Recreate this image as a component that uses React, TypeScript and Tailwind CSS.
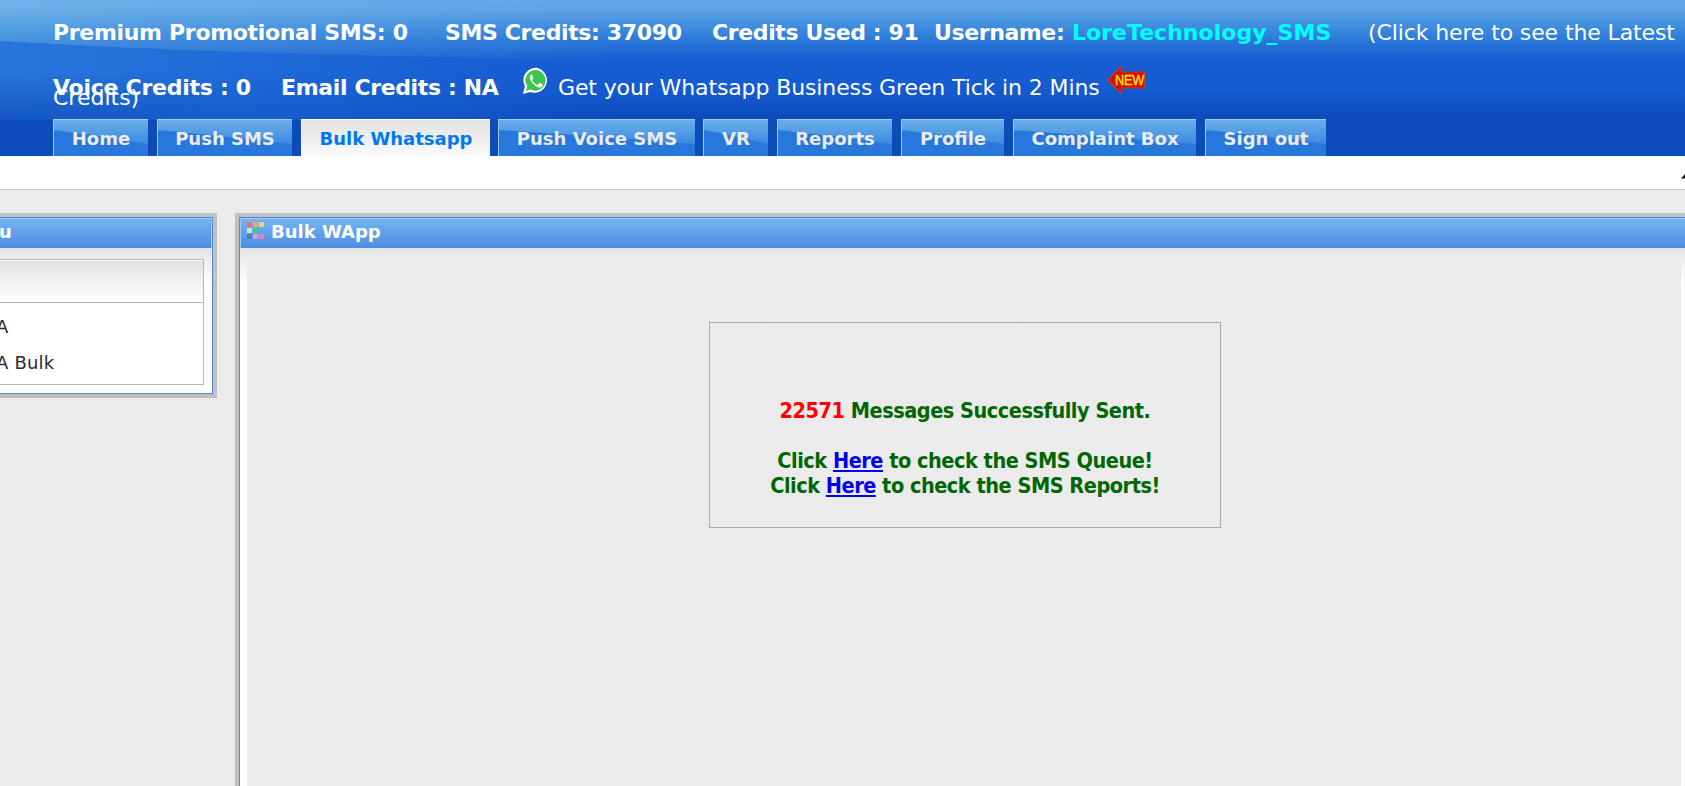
import React from "react";

const tabs = [
  { label: "Home", cls: "ml-[53px] w-[95px]" },
  { label: "Push SMS", cls: "ml-[9px] w-[135px]" },
  { label: "Bulk Whatsapp", cls: "ml-[9px] w-[189px]", active: true },
  { label: "Push Voice SMS", cls: "ml-[8px] w-[197px]" },
  { label: "VR", cls: "ml-[8px] w-[65px]" },
  { label: "Reports", cls: "ml-[9px] w-[115px]" },
  { label: "Profile", cls: "ml-[9px] w-[103px]" },
  { label: "Complaint Box", cls: "ml-[9px] w-[183px]" },
  { label: "Sign out", cls: "ml-[9px] w-[121px]" },
];

function HeaderBackground() {
  return (
    <svg className="absolute inset-0 h-[120px] w-full" viewBox="0 0 1685 120" preserveAspectRatio="none">
      <defs>
        <linearGradient id="base" x1="0" y1="0" x2="0" y2="1">
          <stop offset="0" stopColor="#62a8e8" />
          <stop offset="0.08" stopColor="#5ca3e6" />
          <stop offset="0.3" stopColor="#307fda" />
          <stop offset="0.5" stopColor="#165dd2" />
          <stop offset="0.74" stopColor="#155bd1" />
          <stop offset="1" stopColor="#0d4aba" />
        </linearGradient>
        <linearGradient id="lower" x1="0" y1="0" x2="1" y2="0">
          <stop offset="0" stopColor="#2876dc" />
          <stop offset="0.5" stopColor="#1c68d6" />
          <stop offset="1" stopColor="#165dd2" stopOpacity="0" />
        </linearGradient>
        <linearGradient id="lowerShade" x1="0" y1="0" x2="1" y2="0">
          <stop offset="0" stopColor="#0d4aba" stopOpacity="0.75" />
          <stop offset="1" stopColor="#0d4aba" stopOpacity="0" />
        </linearGradient>
        <linearGradient id="fade" x1="0" y1="0" x2="0" y2="1">
          <stop offset="0.4" stopColor="#000" />
          <stop offset="1" stopColor="#fff" />
        </linearGradient>
        <mask id="fadeMask">
          <rect x="0" y="41" width="620" height="79" fill="url(#fade)" />
        </mask>
        <linearGradient id="glow" x1="0" y1="0" x2="1" y2="0">
          <stop offset="0" stopColor="#8accee" stopOpacity="0.3" />
          <stop offset="1" stopColor="#8accee" stopOpacity="0" />
        </linearGradient>
      </defs>
      <rect width="1685" height="120" fill="url(#base)" />
      <path d="M0 0H620V60Q240 56 0 41Z" fill="url(#glow)" />
      <path d="M0 41Q240 56 620 60V120H0Z" fill="url(#lower)" />
      <path d="M0 41Q240 56 620 60V120H0Z" fill="url(#lowerShade)" mask="url(#fadeMask)" />
    </svg>
  );
}

function TabShine() {
  return (
    <svg className="absolute inset-0 h-full w-full" viewBox="0 0 100 36" preserveAspectRatio="none">
      <defs>
        <linearGradient id="shine" x1="0" y1="0" x2="0" y2="1">
          <stop offset="0" stopColor="#6aaeec" />
          <stop offset="1" stopColor="#3c8ae0" />
        </linearGradient>
      </defs>
      <path d="M0 0H100V24Q50 16 0 10Z" fill="url(#shine)" />
    </svg>
  );
}

function WhatsappIcon() {
  return (
    <svg className="ml-[23px] -mt-[9px] h-[28px] w-[27px] shrink-0" viewBox="0 0 26 27">
      <path d="M13.2.8A12 12 0 0 0 2.8 18.6L.8 26l7.1-2A12 12 0 1 0 13.2.8Z" fill="#fff" />
      <path d="M13.2 2.9a10 10 0 0 0-8.1 15.7l-1.3 4.5 4.4-1.3A10 10 0 1 0 13.2 2.9Z" fill="#3fc351" />
      <path
        d="M9.4 7.3c-.5 0-1.8.9-1.8 2.8 0 2 1.4 3.9 1.7 4.2.2.3 2.8 4.3 6.8 5.4 1.9.6 3.6-.6 3.8-1.8.2-.8.1-1-.3-1.2l-2.4-1.2c-.4-.1-.7 0-1 .4l-.8 1.1c-.3.3-.6.3-1 .1-2-.8-3.5-2.2-4.5-4-.2-.4 0-.7.9-1.9.2-.3.1-.6 0-.8L9.9 7.6c-.1-.3-.3-.3-.5-.3Z"
        fill="#fff"
      />
    </svg>
  );
}

function NewBadge() {
  return (
    <svg className="-mt-[11px] h-[30px] w-[39px] shrink-0" viewBox="0 0 39 30">
      <path d="M.8 15 14.500 1v6H37.500v16H14.500v6Z" fill="#e00808" stroke="#b8402c" strokeWidth="1.2" />
      <text x="8" y="20" textLength="29" lengthAdjust="spacingAndGlyphs" fontFamily="Liberation Sans, sans-serif" fontSize="15.5" fill="#ffee00" stroke="#ffee00" strokeWidth="0.3">
        NEW
      </text>
    </svg>
  );
}

const dots = ["#ff6b6b", "#ffa36b", "#f3d35a", "#cdeaa5", "#4fcb63", "#5eaaf0", "#5479b5", "#d99ae0", "#ff77b0"];

function GridIcon() {
  return (
    <svg className="h-[17px] w-[17px] shrink-0" viewBox="0 0 17 17">
      {dots.map((c, i) => (
        <rect key={c} x={(i % 3) * 6} y={Math.floor(i / 3) * 6} width="5" height="5" fill={c} />
      ))}
    </svg>
  );
}

export default function App() {
  return (
    <div className="flex h-[786px] w-[1685px] flex-col overflow-hidden bg-[#ebebeb] font-['Verdana','DejaVu_Sans',sans-serif]">
      <header className="relative flex h-[156px] shrink-0 flex-col bg-[#0d4aba] text-[22px] leading-[24px] text-white">
        <HeaderBackground />
        <div className="relative mt-[21px] flex h-[24px] pl-[53px] tracking-[-0.32px] whitespace-nowrap">
          <b className="w-[392px] shrink-0">Premium Promotional SMS: 0</b>
          <b className="w-[267px] shrink-0 tracking-[-0.36px]">SMS Credits: 37090</b>
          <b className="w-[222px] shrink-0 tracking-[-0.38px]">Credits Used : 91</b>
          <b className="w-[138px] shrink-0 tracking-[-0.4px]">Username:</b>
          <b className="w-[296px] shrink-0 text-[#00ffff]">
            <span className="tracking-[0.03px]">LoreTechnology_SMS</span>
          </b>
          <span className="tracking-[-0.12px]">(Click here to see the Latest</span>
          <span className="absolute top-[65px] left-[53px] tracking-normal">Credits)</span>
        </div>
        <div className="relative mt-[31px] flex h-[24px] pl-[53px] tracking-[-0.32px] whitespace-nowrap">
          <b className="w-[228px] shrink-0 tracking-[-0.26px]">Voice Credits : 0</b>
          <b className="w-[218px] shrink-0 tracking-[-0.36px]">Email Credits : NA</b>
          <WhatsappIcon />
          <span className="ml-[9px] w-[549px] shrink-0 tracking-[-0.12px]">Get your Whatsapp Business Green Tick in 2 Mins</span>
          <NewBadge />
        </div>
        <nav className="relative mt-[19px] flex h-[37px] text-[18px] leading-[37px] font-bold whitespace-nowrap">
          {tabs.map((t) =>
            t.active ? (
              <div key={t.label} className={`${t.cls} relative shrink-0 border-t border-l border-white bg-linear-to-b from-[#e2e2e2] to-[#fafafa] text-center text-[#0078f0]`}>
                {t.label}
              </div>
            ) : (
              <div key={t.label} className={`${t.cls} relative shrink-0 border-t border-l border-[#9fcaf5] bg-[#2877dc] text-center text-[#ebebeb]`}>
                <TabShine />
                <span className="relative">{t.label}</span>
              </div>
            ),
          )}
        </nav>
      </header>

      <div className="flex h-[34px] shrink-0 justify-end border-b border-[#c8c8c8] bg-white">
        <svg className="mt-[16px] h-[8px] w-[4px]" viewBox="0 0 4 8">
          <path d="M0 6.500 4 2V6.500Z" fill="#111" />
        </svg>
      </div>

      <main className="flex min-h-0 flex-1 pt-[23px]">
        <aside className="h-[185px] w-[217px] shrink-0 border-y-4 border-r-4 border-[#c0c0c0]">
          <div className="flex h-full flex-col border-y border-r border-[#4b8be0] bg-white">
            <div className="h-[30px] shrink-0 border-t border-r border-[#9dcbf7] bg-linear-to-b from-[#74b4f3] to-[#4d8de2] text-[18px] leading-[26px] font-bold text-white">
              <span className="-ml-px">u</span>
            </div>
            <div className="flex flex-1 flex-col bg-linear-to-b from-[#e4e4e4] to-white to-[36px] pt-[11px] pr-[8px]">
              <div className="flex h-[126px] flex-col border-y border-r border-[#b8b8b8] bg-white text-[18px] text-[#2b2b2b]">
                <div className="mt-px h-[42px] shrink-0 border-b border-[#b8b8b8] bg-linear-to-b from-[#e2e2e2] to-white" />
                <div className="-ml-[4px] pt-[6px] leading-[36px] tracking-[0.2px]">
                  <div>A</div>
                  <div>A Bulk</div>
                </div>
              </div>
            </div>
          </div>
        </aside>

        <section className="ml-[18px] flex flex-1 flex-col border-t-4 border-l-4 border-[#c0c0c0]">
          <div className="flex flex-1 flex-col border-t border-l border-[#4b8be0] bg-white">
            <div className="flex h-[30px] shrink-0 border-t border-l border-[#9dcbf7] bg-linear-to-b from-[#74b4f3] to-[#4d8de2] pt-[3px] pl-[6px] text-[18px] leading-[20px] font-bold text-white">
              <GridIcon />
              <span className="ml-[7px]">Bulk WApp</span>
            </div>
            <div className="flex flex-1 flex-col bg-linear-to-b from-[#e4e4e4] to-white to-[36px] pr-[4px] pl-[7px]">
              <div className="flex flex-1 justify-center bg-linear-to-b from-[#e4e4e4] to-[#ebebeb] to-[10px] pt-[74px] pl-[2px]">
                <div className="h-[206px] w-[512px] border border-[#a5a9bb] pt-[75px] text-center font-['Tahoma','DejaVu_Sans_Condensed','DejaVu_Sans',sans-serif] text-[21.5px] leading-[25px] font-bold tracking-[-0.48px] whitespace-nowrap text-[#006600]">
                  <p>
                    <span className="text-[#ff0000]">22571</span> Messages Successfully Sent.
                  </p>
                  <p className="mt-[25px]">
                    Click <a className="text-[#0000ee] underline">Here</a> to check the SMS Queue!
                  </p>
                  <p>
                    Click <a className="text-[#0000ee] underline">Here</a> to check the SMS Reports!
                  </p>
                </div>
              </div>
            </div>
          </div>
        </section>
      </main>
    </div>
  );
}
